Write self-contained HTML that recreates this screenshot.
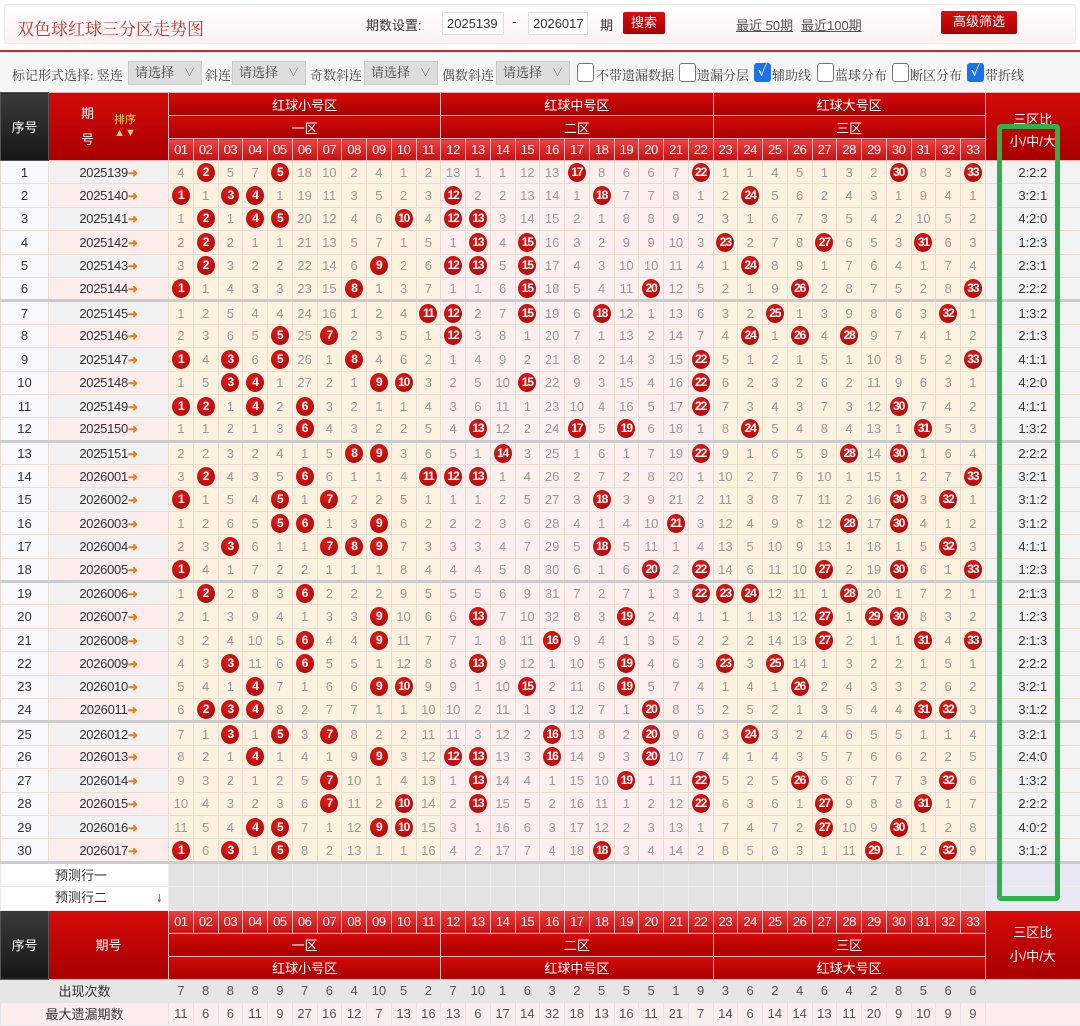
<!DOCTYPE html>
<html><head><meta charset="utf-8">
<style>
*{box-sizing:border-box;margin:0;padding:0}
body{width:1080px;height:1014px;overflow:hidden;background:#fff;font-family:"Liberation Sans","Noto Sans CJK SC",sans-serif;position:relative}
.top{position:absolute;left:4px;top:4px;width:1072px;height:40px;border:1px solid #eee;background:linear-gradient(#fff,#fdf1f1);}
.a{position:absolute;white-space:nowrap}
.title{left:12px;top:10px;font-size:17px;color:#c33;font-family:"Noto Serif CJK SC",serif}
.inp{background:#fff;border:1px solid #ddd;font-size:13px;color:#333;height:23px;line-height:21px;padding-left:4px}
.btn{background:linear-gradient(#d81010,#a80000);color:#fff;font-size:13px;text-align:center;line-height:22px;height:22px;border-radius:2px}
.lnk{font-size:13px;color:#555;text-decoration:underline}
.rl{position:absolute;left:0;top:50px;width:1080px;height:3px;background:#b33;border-bottom:1px solid #ddd}
.tb{position:absolute;left:0;top:54px;width:1080px;height:38px;background:#f5f5f5}
.tb .a{font-size:13px;color:#444;top:11px;font-family:"Liberation Serif","Noto Serif CJK SC",serif}
.sel{top:7px!important;height:24px;background:#ddd;border:1px solid #ccc;font-size:13px;color:#222;padding-left:6px;line-height:22px}
.sel:after{content:"\2228";position:absolute;right:6px;top:0;font-size:11px;color:#555}
.cb{top:9px!important;width:17px;height:19px;border:1px solid #777;border-radius:3px;background:#fff}
.cb.on{background:#1a73e8;border-color:#1a73e8;color:#fff;font-size:14px;line-height:17px;text-align:center;font-weight:bold}
table{position:absolute;left:0;top:92px;border-collapse:collapse;table-layout:fixed;width:1080px}
td,th{border:1px solid #eadcd0;text-align:center;padding:0;font-size:13px;color:#9a9a9a;font-weight:normal;white-space:nowrap;overflow:hidden}
tr{height:23px}
tr.d{height:23.4px}
th{color:#fff;border-color:#f3b5b5;background:linear-gradient(#d40a0a,#a80000);font-size:13px}
th.dk{background:linear-gradient(#3a3a3a,#161616);border-color:#555}
th.n{background:linear-gradient(#ee4444,#c41010);font-size:13px;letter-spacing:-.5px}
td.s{background:#f9f9fc;color:#333}
td.q{background:#f1f1f1;color:#333;letter-spacing:-.3px}
tr.e td.q{background:#fcecec}
td.q i{color:#f07d1a;font-style:normal;font-weight:bold;font-size:12px}
td.r{background:#f3f3f3;color:#333}
tr.g td{border-bottom:3px solid #ccc}
b{display:inline-block;width:18px;height:19px;border-radius:50%;background:radial-gradient(circle at 40% 35%,#e21d1d,#a80000);color:#fff;font-size:12px;line-height:19px;letter-spacing:-1px;vertical-align:middle}
tr.p td{background:#e4e4e4;border-color:#ececec}
tr.p td.pl{background:#fff;color:#333;text-align:left;padding-left:54px}
tr.p td.pr{background:#e8e8f4}
tr.c td{background:#e6e6e6;color:#555;border-color:#e6e6e6}
tr.c td.cl{color:#333}
.green{position:absolute;left:997px;top:124px;width:63px;height:777px;border:5px solid #2db14a;border-radius:4px}
</style></head><body>
<div class="top">
<div class="a title">双色球红球三分区走势图</div>
<div class="a" style="left:361px;top:10px;font-size:13px;color:#333">期数设置:</div>
<div class="a inp" style="left:437px;top:7px;width:62px">2025139</div>
<div class="a" style="left:507px;top:9px;font-size:13px;color:#333">-</div>
<div class="a inp" style="left:523px;top:7px;width:60px">2026017</div>
<div class="a" style="left:595px;top:10px;font-size:13px;color:#333">期</div>
<div class="a btn" style="left:618px;top:7px;width:42px">搜索</div>
<div class="a lnk" style="left:731px;top:10px">最近 50期</div>
<div class="a lnk" style="left:796px;top:10px">最近100期</div>
<div class="a btn" style="left:936px;top:6px;width:76px;height:23px">高级筛选</div>
</div>
<div class="rl"></div>
<div class="tb">
<div class="a" style="left:12px">标记形式选择: 竖连</div>
<div class="a sel" style="left:128px;width:74px">请选择</div>
<div class="a" style="left:205px">斜连</div>
<div class="a sel" style="left:232px;width:74px">请选择</div>
<div class="a" style="left:310px">奇数斜连</div>
<div class="a sel" style="left:364px;width:74px">请选择</div>
<div class="a" style="left:442px">偶数斜连</div>
<div class="a sel" style="left:496px;width:74px">请选择</div>
<div class="a cb" style="left:577px"></div><div class="a" style="left:596px">不带遗漏数据</div>
<div class="a cb" style="left:679px"></div><div class="a" style="left:697px">遗漏分层</div>
<div class="a cb on" style="left:754px">✓</div><div class="a" style="left:772px">辅助线</div>
<div class="a cb" style="left:817px"></div><div class="a" style="left:835px">蓝球分布</div>
<div class="a cb" style="left:892px"></div><div class="a" style="left:910px">断区分布</div>
<div class="a cb on" style="left:967px">✓</div><div class="a" style="left:985px">带折线</div>
</div>
<table>
<colgroup><col style="width:48px"><col style="width:120px">
<col span="11" style="width:24.75px;background:#fdf1df"><col span="11" style="width:24.75px;background:#fcefee"><col span="11" style="width:24.75px;background:#fdf1df"><col style="width:95px"></colgroup>
<tr><th class="dk" rowspan="3">序号</th><th rowspan="3"><span style="display:inline-block;line-height:26px;margin-right:20px;vertical-align:middle">期<br>号</span><span style="display:inline-block;color:#ffd86a;font-size:11px;line-height:13px;vertical-align:middle">排序<br>▲▼</span></th><th colspan="11">红球小号区</th><th colspan="11">红球中号区</th><th colspan="11">红球大号区</th><th rowspan="3" style="line-height:22px;padding-top:8px">三区比<br>小/中/大</th></tr>
<tr><th colspan="11">一区</th><th colspan="11">二区</th><th colspan="11">三区</th></tr>
<tr style="height:22px"><th class="n">01</th><th class="n">02</th><th class="n">03</th><th class="n">04</th><th class="n">05</th><th class="n">06</th><th class="n">07</th><th class="n">08</th><th class="n">09</th><th class="n">10</th><th class="n">11</th><th class="n">12</th><th class="n">13</th><th class="n">14</th><th class="n">15</th><th class="n">16</th><th class="n">17</th><th class="n">18</th><th class="n">19</th><th class="n">20</th><th class="n">21</th><th class="n">22</th><th class="n">23</th><th class="n">24</th><th class="n">25</th><th class="n">26</th><th class="n">27</th><th class="n">28</th><th class="n">29</th><th class="n">30</th><th class="n">31</th><th class="n">32</th><th class="n">33</th></tr>
<tr class="d"><td class="s">1<td class="q">2025139<i>➜</i><td>4<td><b>2</b><td>5<td>7<td><b>5</b><td>18<td>10<td>2<td>4<td>1<td>2<td>13<td>1<td>1<td>12<td>13<td><b>17</b><td>8<td>6<td>6<td>7<td><b>22</b><td>1<td>1<td>4<td>5<td>1<td>3<td>2<td><b>30</b><td>8<td>3<td><b>33</b><td class="r">2:2:2</tr>
<tr class="d e"><td class="s">2<td class="q">2025140<i>➜</i><td><b>1</b><td>1<td><b>3</b><td><b>4</b><td>1<td>19<td>11<td>3<td>5<td>2<td>3<td><b>12</b><td>2<td>2<td>13<td>14<td>1<td><b>18</b><td>7<td>7<td>8<td>1<td>2<td><b>24</b><td>5<td>6<td>2<td>4<td>3<td>1<td>9<td>4<td>1<td class="r">3:2:1</tr>
<tr class="d"><td class="s">3<td class="q">2025141<i>➜</i><td>1<td><b>2</b><td>1<td><b>4</b><td><b>5</b><td>20<td>12<td>4<td>6<td><b>10</b><td>4<td><b>12</b><td><b>13</b><td>3<td>14<td>15<td>2<td>1<td>8<td>8<td>9<td>2<td>3<td>1<td>6<td>7<td>3<td>5<td>4<td>2<td>10<td>5<td>2<td class="r">4:2:0</tr>
<tr class="d e"><td class="s">4<td class="q">2025142<i>➜</i><td>2<td><b>2</b><td>2<td>1<td>1<td>21<td>13<td>5<td>7<td>1<td>5<td>1<td><b>13</b><td>4<td><b>15</b><td>16<td>3<td>2<td>9<td>9<td>10<td>3<td><b>23</b><td>2<td>7<td>8<td><b>27</b><td>6<td>5<td>3<td><b>31</b><td>6<td>3<td class="r">1:2:3</tr>
<tr class="d"><td class="s">5<td class="q">2025143<i>➜</i><td>3<td><b>2</b><td>3<td>2<td>2<td>22<td>14<td>6<td><b>9</b><td>2<td>6<td><b>12</b><td><b>13</b><td>5<td><b>15</b><td>17<td>4<td>3<td>10<td>10<td>11<td>4<td>1<td><b>24</b><td>8<td>9<td>1<td>7<td>6<td>4<td>1<td>7<td>4<td class="r">2:3:1</tr>
<tr class="d e g"><td class="s">6<td class="q">2025144<i>➜</i><td><b>1</b><td>1<td>4<td>3<td>3<td>23<td>15<td><b>8</b><td>1<td>3<td>7<td>1<td>1<td>6<td><b>15</b><td>18<td>5<td>4<td>11<td><b>20</b><td>12<td>5<td>2<td>1<td>9<td><b>26</b><td>2<td>8<td>7<td>5<td>2<td>8<td><b>33</b><td class="r">2:2:2</tr>
<tr class="d"><td class="s">7<td class="q">2025145<i>➜</i><td>1<td>2<td>5<td>4<td>4<td>24<td>16<td>1<td>2<td>4<td><b>11</b><td><b>12</b><td>2<td>7<td><b>15</b><td>19<td>6<td><b>18</b><td>12<td>1<td>13<td>6<td>3<td>2<td><b>25</b><td>1<td>3<td>9<td>8<td>6<td>3<td><b>32</b><td>1<td class="r">1:3:2</tr>
<tr class="d e"><td class="s">8<td class="q">2025146<i>➜</i><td>2<td>3<td>6<td>5<td><b>5</b><td>25<td><b>7</b><td>2<td>3<td>5<td>1<td><b>12</b><td>3<td>8<td>1<td>20<td>7<td>1<td>13<td>2<td>14<td>7<td>4<td><b>24</b><td>1<td><b>26</b><td>4<td><b>28</b><td>9<td>7<td>4<td>1<td>2<td class="r">2:1:3</tr>
<tr class="d"><td class="s">9<td class="q">2025147<i>➜</i><td><b>1</b><td>4<td><b>3</b><td>6<td><b>5</b><td>26<td>1<td><b>8</b><td>4<td>6<td>2<td>1<td>4<td>9<td>2<td>21<td>8<td>2<td>14<td>3<td>15<td><b>22</b><td>5<td>1<td>2<td>1<td>5<td>1<td>10<td>8<td>5<td>2<td><b>33</b><td class="r">4:1:1</tr>
<tr class="d e"><td class="s">10<td class="q">2025148<i>➜</i><td>1<td>5<td><b>3</b><td><b>4</b><td>1<td>27<td>2<td>1<td><b>9</b><td><b>10</b><td>3<td>2<td>5<td>10<td><b>15</b><td>22<td>9<td>3<td>15<td>4<td>16<td><b>22</b><td>6<td>2<td>3<td>2<td>6<td>2<td>11<td>9<td>6<td>3<td>1<td class="r">4:2:0</tr>
<tr class="d"><td class="s">11<td class="q">2025149<i>➜</i><td><b>1</b><td><b>2</b><td>1<td><b>4</b><td>2<td><b>6</b><td>3<td>2<td>1<td>1<td>4<td>3<td>6<td>11<td>1<td>23<td>10<td>4<td>16<td>5<td>17<td><b>22</b><td>7<td>3<td>4<td>3<td>7<td>3<td>12<td><b>30</b><td>7<td>4<td>2<td class="r">4:1:1</tr>
<tr class="d e g"><td class="s">12<td class="q">2025150<i>➜</i><td>1<td>1<td>2<td>1<td>3<td><b>6</b><td>4<td>3<td>2<td>2<td>5<td>4<td><b>13</b><td>12<td>2<td>24<td><b>17</b><td>5<td><b>19</b><td>6<td>18<td>1<td>8<td><b>24</b><td>5<td>4<td>8<td>4<td>13<td>1<td><b>31</b><td>5<td>3<td class="r">1:3:2</tr>
<tr class="d"><td class="s">13<td class="q">2025151<i>➜</i><td>2<td>2<td>3<td>2<td>4<td>1<td>5<td><b>8</b><td><b>9</b><td>3<td>6<td>5<td>1<td><b>14</b><td>3<td>25<td>1<td>6<td>1<td>7<td>19<td><b>22</b><td>9<td>1<td>6<td>5<td>9<td><b>28</b><td>14<td><b>30</b><td>1<td>6<td>4<td class="r">2:2:2</tr>
<tr class="d e"><td class="s">14<td class="q">2026001<i>➜</i><td>3<td><b>2</b><td>4<td>3<td>5<td><b>6</b><td>6<td>1<td>1<td>4<td><b>11</b><td><b>12</b><td><b>13</b><td>1<td>4<td>26<td>2<td>7<td>2<td>8<td>20<td>1<td>10<td>2<td>7<td>6<td>10<td>1<td>15<td>1<td>2<td>7<td><b>33</b><td class="r">3:2:1</tr>
<tr class="d"><td class="s">15<td class="q">2026002<i>➜</i><td><b>1</b><td>1<td>5<td>4<td><b>5</b><td>1<td><b>7</b><td>2<td>2<td>5<td>1<td>1<td>1<td>2<td>5<td>27<td>3<td><b>18</b><td>3<td>9<td>21<td>2<td>11<td>3<td>8<td>7<td>11<td>2<td>16<td><b>30</b><td>3<td><b>32</b><td>1<td class="r">3:1:2</tr>
<tr class="d e"><td class="s">16<td class="q">2026003<i>➜</i><td>1<td>2<td>6<td>5<td><b>5</b><td><b>6</b><td>1<td>3<td><b>9</b><td>6<td>2<td>2<td>2<td>3<td>6<td>28<td>4<td>1<td>4<td>10<td><b>21</b><td>3<td>12<td>4<td>9<td>8<td>12<td><b>28</b><td>17<td><b>30</b><td>4<td>1<td>2<td class="r">3:1:2</tr>
<tr class="d"><td class="s">17<td class="q">2026004<i>➜</i><td>2<td>3<td><b>3</b><td>6<td>1<td>1<td><b>7</b><td><b>8</b><td><b>9</b><td>7<td>3<td>3<td>3<td>4<td>7<td>29<td>5<td><b>18</b><td>5<td>11<td>1<td>4<td>13<td>5<td>10<td>9<td>13<td>1<td>18<td>1<td>5<td><b>32</b><td>3<td class="r">4:1:1</tr>
<tr class="d e g"><td class="s">18<td class="q">2026005<i>➜</i><td><b>1</b><td>4<td>1<td>7<td>2<td>2<td>1<td>1<td>1<td>8<td>4<td>4<td>4<td>5<td>8<td>30<td>6<td>1<td>6<td><b>20</b><td>2<td><b>22</b><td>14<td>6<td>11<td>10<td><b>27</b><td>2<td>19<td><b>30</b><td>6<td>1<td><b>33</b><td class="r">1:2:3</tr>
<tr class="d"><td class="s">19<td class="q">2026006<i>➜</i><td>1<td><b>2</b><td>2<td>8<td>3<td><b>6</b><td>2<td>2<td>2<td>9<td>5<td>5<td>5<td>6<td>9<td>31<td>7<td>2<td>7<td>1<td>3<td><b>22</b><td><b>23</b><td><b>24</b><td>12<td>11<td>1<td><b>28</b><td>20<td>1<td>7<td>2<td>1<td class="r">2:1:3</tr>
<tr class="d e"><td class="s">20<td class="q">2026007<i>➜</i><td>2<td>1<td>3<td>9<td>4<td>1<td>3<td>3<td><b>9</b><td>10<td>6<td>6<td><b>13</b><td>7<td>10<td>32<td>8<td>3<td><b>19</b><td>2<td>4<td>1<td>1<td>1<td>13<td>12<td><b>27</b><td>1<td><b>29</b><td><b>30</b><td>8<td>3<td>2<td class="r">1:2:3</tr>
<tr class="d"><td class="s">21<td class="q">2026008<i>➜</i><td>3<td>2<td>4<td>10<td>5<td><b>6</b><td>4<td>4<td><b>9</b><td>11<td>7<td>7<td>1<td>8<td>11<td><b>16</b><td>9<td>4<td>1<td>3<td>5<td>2<td>2<td>2<td>14<td>13<td><b>27</b><td>2<td>1<td>1<td><b>31</b><td>4<td><b>33</b><td class="r">2:1:3</tr>
<tr class="d e"><td class="s">22<td class="q">2026009<i>➜</i><td>4<td>3<td><b>3</b><td>11<td>6<td><b>6</b><td>5<td>5<td>1<td>12<td>8<td>8<td><b>13</b><td>9<td>12<td>1<td>10<td>5<td><b>19</b><td>4<td>6<td>3<td><b>23</b><td>3<td><b>25</b><td>14<td>1<td>3<td>2<td>2<td>1<td>5<td>1<td class="r">2:2:2</tr>
<tr class="d"><td class="s">23<td class="q">2026010<i>➜</i><td>5<td>4<td>1<td><b>4</b><td>7<td>1<td>6<td>6<td><b>9</b><td><b>10</b><td>9<td>9<td>1<td>10<td><b>15</b><td>2<td>11<td>6<td><b>19</b><td>5<td>7<td>4<td>1<td>4<td>1<td><b>26</b><td>2<td>4<td>3<td>3<td>2<td>6<td>2<td class="r">3:2:1</tr>
<tr class="d e g"><td class="s">24<td class="q">2026011<i>➜</i><td>6<td><b>2</b><td><b>3</b><td><b>4</b><td>8<td>2<td>7<td>7<td>1<td>1<td>10<td>10<td>2<td>11<td>1<td>3<td>12<td>7<td>1<td><b>20</b><td>8<td>5<td>2<td>5<td>2<td>1<td>3<td>5<td>4<td>4<td><b>31</b><td><b>32</b><td>3<td class="r">3:1:2</tr>
<tr class="d"><td class="s">25<td class="q">2026012<i>➜</i><td>7<td>1<td><b>3</b><td>1<td><b>5</b><td>3<td><b>7</b><td>8<td>2<td>2<td>11<td>11<td>3<td>12<td>2<td><b>16</b><td>13<td>8<td>2<td><b>20</b><td>9<td>6<td>3<td><b>24</b><td>3<td>2<td>4<td>6<td>5<td>5<td>1<td>1<td>4<td class="r">3:2:1</tr>
<tr class="d e"><td class="s">26<td class="q">2026013<i>➜</i><td>8<td>2<td>1<td><b>4</b><td>1<td>4<td>1<td>9<td><b>9</b><td>3<td>12<td><b>12</b><td><b>13</b><td>13<td>3<td><b>16</b><td>14<td>9<td>3<td><b>20</b><td>10<td>7<td>4<td>1<td>4<td>3<td>5<td>7<td>6<td>6<td>2<td>2<td>5<td class="r">2:4:0</tr>
<tr class="d"><td class="s">27<td class="q">2026014<i>➜</i><td>9<td>3<td>2<td>1<td>2<td>5<td><b>7</b><td>10<td>1<td>4<td>13<td>1<td><b>13</b><td>14<td>4<td>1<td>15<td>10<td><b>19</b><td>1<td>11<td><b>22</b><td>5<td>2<td>5<td><b>26</b><td>6<td>8<td>7<td>7<td>3<td><b>32</b><td>6<td class="r">1:3:2</tr>
<tr class="d e"><td class="s">28<td class="q">2026015<i>➜</i><td>10<td>4<td>3<td>2<td>3<td>6<td><b>7</b><td>11<td>2<td><b>10</b><td>14<td>2<td><b>13</b><td>15<td>5<td>2<td>16<td>11<td>1<td>2<td>12<td><b>22</b><td>6<td>3<td>6<td>1<td><b>27</b><td>9<td>8<td>8<td><b>31</b><td>1<td>7<td class="r">2:2:2</tr>
<tr class="d"><td class="s">29<td class="q">2026016<i>➜</i><td>11<td>5<td>4<td><b>4</b><td><b>5</b><td>7<td>1<td>12<td><b>9</b><td><b>10</b><td>15<td>3<td>1<td>16<td>6<td>3<td>17<td>12<td>2<td>3<td>13<td>1<td>7<td>4<td>7<td>2<td><b>27</b><td>10<td>9<td><b>30</b><td>1<td>2<td>8<td class="r">4:0:2</tr>
<tr class="d e g"><td class="s">30<td class="q">2026017<i>➜</i><td><b>1</b><td>6<td><b>3</b><td>1<td><b>5</b><td>8<td>2<td>13<td>1<td>1<td>16<td>4<td>2<td>17<td>7<td>4<td>18<td><b>18</b><td>3<td>4<td>14<td>2<td>8<td>5<td>8<td>3<td>1<td>11<td><b>29</b><td>1<td>2<td><b>32</b><td>9<td class="r">3:1:2</tr>
<tr class="p" style="height:24px"><td class="pl" colspan="2">预测行一<td><td><td><td><td><td><td><td><td><td><td><td><td><td><td><td><td><td><td><td><td><td><td><td><td><td><td><td><td><td><td><td><td><td class="pr"></tr>
<tr class="p" style="height:24px"><td class="pl" colspan="2">预测行二<span style="color:#d44;font-size:11px;margin-left:50px">🠗</span><td><td><td><td><td><td><td><td><td><td><td><td><td><td><td><td><td><td><td><td><td><td><td><td><td><td><td><td><td><td><td><td><td><td class="pr"></tr>
<tr><th class="dk" rowspan="3">序号</th><th rowspan="3">期号</th><th class="n">01</th><th class="n">02</th><th class="n">03</th><th class="n">04</th><th class="n">05</th><th class="n">06</th><th class="n">07</th><th class="n">08</th><th class="n">09</th><th class="n">10</th><th class="n">11</th><th class="n">12</th><th class="n">13</th><th class="n">14</th><th class="n">15</th><th class="n">16</th><th class="n">17</th><th class="n">18</th><th class="n">19</th><th class="n">20</th><th class="n">21</th><th class="n">22</th><th class="n">23</th><th class="n">24</th><th class="n">25</th><th class="n">26</th><th class="n">27</th><th class="n">28</th><th class="n">29</th><th class="n">30</th><th class="n">31</th><th class="n">32</th><th class="n">33</th><th rowspan="3" style="line-height:24px">三区比<br>小/中/大</th></tr>
<tr><th colspan="11">一区</th><th colspan="11">二区</th><th colspan="11">三区</th></tr>
<tr><th colspan="11">红球小号区</th><th colspan="11">红球中号区</th><th colspan="11">红球大号区</th></tr>
<tr class="c"><td class="cl" colspan="2">出现次数<td>7<td>8<td>8<td>8<td>9<td>7<td>6<td>4<td>10<td>5<td>2<td>7<td>10<td>1<td>6<td>3<td>2<td>5<td>5<td>5<td>1<td>9<td>3<td>6<td>2<td>4<td>6<td>4<td>2<td>8<td>5<td>6<td>6<td></tr>
<tr class="c"><td class="cl" colspan="2" style="background:#fdeeee">最大遗漏期数<td style="background:#fdeeee">11<td style="background:#fdeeee">6<td style="background:#fdeeee">6<td style="background:#fdeeee">11<td style="background:#fdeeee">9<td style="background:#fdeeee">27<td style="background:#fdeeee">16<td style="background:#fdeeee">12<td style="background:#fdeeee">7<td style="background:#fdeeee">13<td style="background:#fdeeee">16<td style="background:#fdeeee">13<td style="background:#fdeeee">6<td style="background:#fdeeee">17<td style="background:#fdeeee">14<td style="background:#fdeeee">32<td style="background:#fdeeee">18<td style="background:#fdeeee">13<td style="background:#fdeeee">16<td style="background:#fdeeee">11<td style="background:#fdeeee">21<td style="background:#fdeeee">7<td style="background:#fdeeee">14<td style="background:#fdeeee">6<td style="background:#fdeeee">14<td style="background:#fdeeee">14<td style="background:#fdeeee">13<td style="background:#fdeeee">11<td style="background:#fdeeee">20<td style="background:#fdeeee">9<td style="background:#fdeeee">10<td style="background:#fdeeee">9<td style="background:#fdeeee">9<td style="background:#fdeeee"></tr>
</table>
<div class="green"></div>
</body></html>
